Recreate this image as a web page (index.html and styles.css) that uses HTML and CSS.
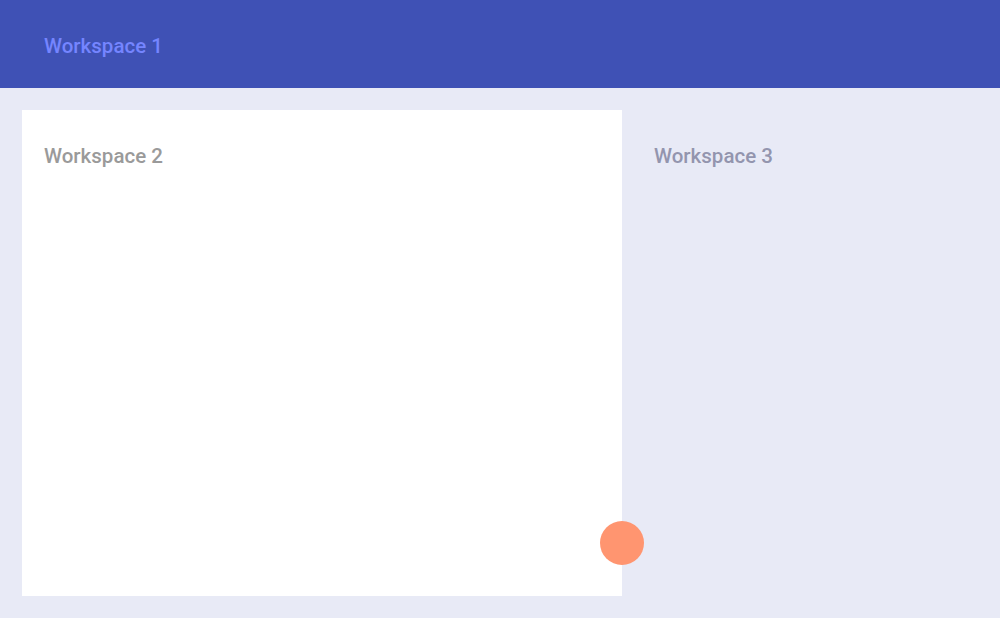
FILE: index.html
```html
<!DOCTYPE html>
<html>
<head>
<meta charset="utf-8">
<link rel="stylesheet" href="styles.css">
</head>
<body>
<header class="topbar">
  <h1 class="title title-top">Workspace 1</h1>
</header>
<main class="main">
  <section class="card">
    <h2 class="title title-card">Workspace 2</h2>
    <span class="dot"></span>
  </section>
  <section class="side">
    <h2 class="title title-side">Workspace 3</h2>
  </section>
</main>
</body>
</html>
```
FILE: styles.css
```css
* { box-sizing: border-box; }
html, body { margin: 0; padding: 0; }
body {
  width: 1000px;
  height: 618px;
  overflow: hidden;
  background: #e8eaf6;
  font-family: Roboto, "Liberation Sans", sans-serif;
}
.title {
  margin: 0;
  font-size: 20.5px;
  font-weight: 500;
  line-height: 24px;
}
.topbar {
  height: 88px;
  background: #3f51b5;
  display: flex;
  align-items: center;
  padding: 4px 44px 0;
}
.title-top { color: #7585ff; }
.main {
  display: flex;
  padding: 22px;
  height: 530px;
}
.card {
  position: relative;
  width: 600px;
  height: 486px;
  background: #ffffff;
  padding: 34px 22px;
}
.title-card { color: #9a9a9a; }
.dot {
  position: absolute;
  right: -22px;
  bottom: 31px;
  width: 44px;
  height: 44px;
  border-radius: 50%;
  background: #ff9570;
}
.side {
  padding: 34px 32px;
}
.title-side { color: #9395ae; }
```
